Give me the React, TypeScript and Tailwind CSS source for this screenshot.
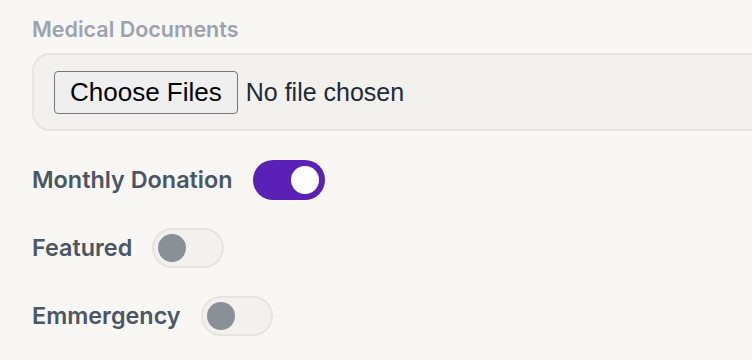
import { useState } from "react";

function Toggle({ on, onChange }: { on: boolean; onChange: () => void }) {
  return (
    <button
      type="button"
      onClick={onChange}
      className={
        on
          ? "relative h-[40px] w-[72px] shrink-0 rounded-full bg-[#5b21b6]"
          : "relative h-[40px] w-[72px] shrink-0 rounded-full border-2 border-[#e6e4df] bg-[#f2f1ee]"
      }
    >
      <span
        className={
          on
            ? "absolute right-[6px] top-[6px] h-[28px] w-[28px] rounded-full bg-white"
            : "absolute left-[4px] top-[4px] h-[28px] w-[28px] rounded-full bg-[#8b8f98]"
        }
      />
    </button>
  );
}

export default function App() {
  const [monthly, setMonthly] = useState(true);
  const [featured, setFeatured] = useState(false);
  const [urgent, setUrgent] = useState(false);

  const rows = [
    { label: "Monthly Donation", on: monthly, toggle: () => setMonthly(!monthly) },
    { label: "Featured", on: featured, toggle: () => setFeatured(!featured) },
    { label: "Emmergency", on: urgent, toggle: () => setUrgent(!urgent) },
  ];

  return (
    <div className="h-screen overflow-hidden bg-[#f8f7f4] pl-8 pt-[14px] font-['Inter',sans-serif]">
      <label className="block text-[21.5px] font-semibold leading-[30px] text-[#9ca3af]">
        Medical Documents
      </label>

      {/* upload box */}
      <div className="mt-[9px] flex h-[78px] w-[800px] items-center rounded-[18px] border-2 border-[#e7e5e0] bg-[#f2f1ee] px-[20px]">
        <input
          type="file"
          multiple
          className="font-['Liberation_Sans',Arial,sans-serif] text-[25px] text-[#1f2937] file:mr-[8px] file:h-[43px] file:rounded-[4px] file:border file:border-[#767676] file:bg-[#efefef] file:px-[15px] file:text-[26px] file:text-black"
        />
      </div>

      {/* toggles */}
      <div className="mt-[29px] flex flex-col gap-[28px]">
        {rows.map((r) => (
          <div key={r.label} className="flex items-center gap-5">
            <span className="text-[23.4px] font-semibold text-[#4b5563]">{r.label}</span>
            <Toggle on={r.on} onChange={r.toggle} />
          </div>
        ))}
      </div>
    </div>
  );
}
